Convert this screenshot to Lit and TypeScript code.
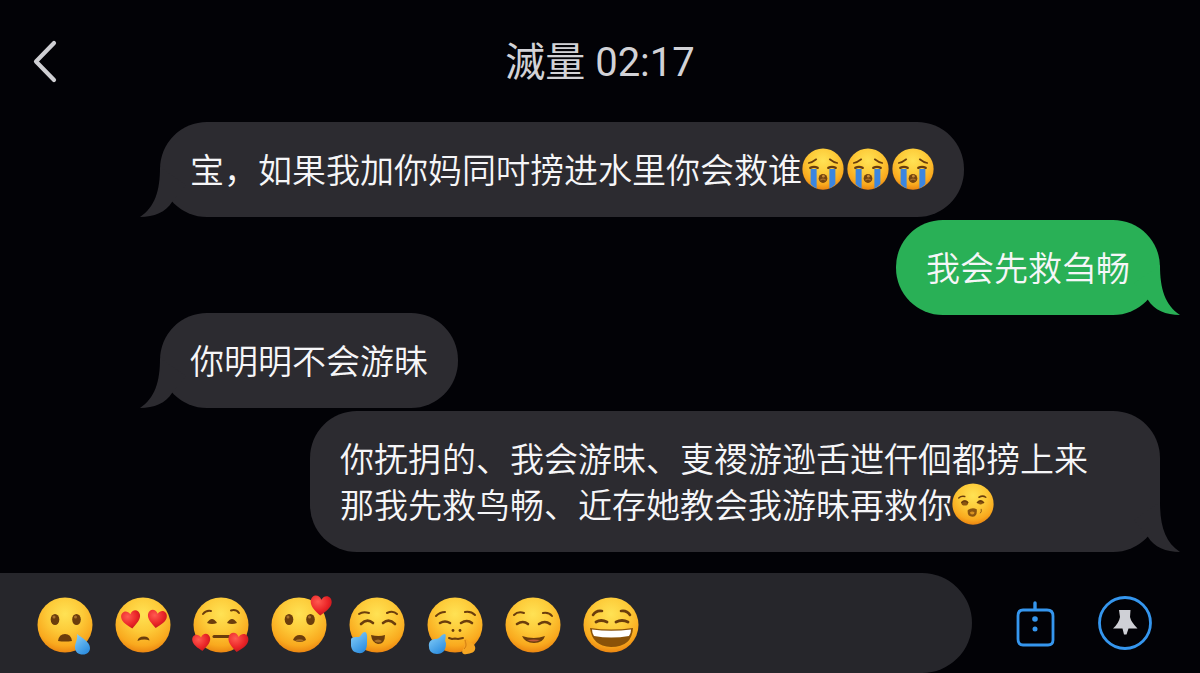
import { LitElement, html, svg, css, nothing } from "lit";
import { customElement, property } from "lit/decorators.js";

const BROWN = "#6b3d0c";

const heart = (x: number, y: number, w: number, tilt = 0) => svg`
  <path transform="translate(${x} ${y}) rotate(${tilt}) scale(${w / 20})" fill="url(#heart)"
    d="M0 10C-5 6-10 2-10-3C-10-9-3-11 0-5C3-11 10-9 10-3C10 2 5 6 0 10Z"/>`;

const line = (d: string, width = 2) => svg`
  <path d=${d} fill="none" stroke=${BROWN} stroke-width=${width} stroke-linecap="round"/>`;

const ovalEyes = svg`
  <ellipse cx="18" cy="22.500" rx="4.300" ry="5.600" fill=${BROWN}/>
  <ellipse cx="39.500" cy="22.500" rx="4.300" ry="5.600" fill=${BROWN}/>
  <circle cx="17" cy="20" r="1.500" fill="#a8702a"/>
  <circle cx="38.500" cy="20" r="1.500" fill="#a8702a"/>`;

const FACES: Record<string, { label: string; art: unknown }> = {
  tear: {
    label: "流泪",
    art: svg`${ovalEyes}
      <path d="M21 44Q22 37 28 37Q34 37 35 44Q28 45 21 44Z" fill=${BROWN}/>
      <path d="M40 37C45 41 53 45 53 51C53 55 50 57.500 46 57.500C41 57.500 38 55 38 50C38 46 41 42 40 37Z" fill="url(#water)"/>`,
  },
  loveSad: {
    label: "爱心眼",
    art: svg`${heart(16, 22, 19, -8)}${heart(42, 21.5, 19, 8)}
      <path d="M22.500 44Q23 39.500 29 39.500Q34 39.500 34.500 43.500Q29 41.500 22.500 44Z" fill=${BROWN}/>`,
  },
  hearts: {
    label: "喜爱",
    art: svg`${line("M10 17Q13 13 18 14")}${line("M38 13.500Q43 12 46 16")}
      <path d="M14 26Q19 18 24 26Q19 28 14 26Z" fill=${BROWN}/>
      <path d="M34 26Q39 18 44 26Q39 28 34 26Z" fill=${BROWN}/>
      ${line("M21 39.500H37", 3)}${heart(8.5, 45, 18, -6)}${heart(45, 45, 20, 8)}`,
  },
  heartTop: {
    label: "心动",
    art: svg`${ovalEyes}
      <path d="M22 43Q24 38 28.500 38Q34 38 35 43Q29 47 22 43Z" fill=${BROWN}/>
      <path d="M24 43.500Q29 41 33 43.500Q29 45.500 24 43.500Z" fill="#a8702a"/>
      ${heart(50, 8, 21, 4)}`,
  },
  thumb: {
    label: "点赞",
    art: svg`${line("M10 17Q14 14 20 16")}${line("M38 16Q44 13 48 17")}
      ${line("M12 27Q18 21 24 26", 2.6)}${line("M34 26Q40 21 46 27", 2.6)}
      <path d="M22 38Q30 40 36 38Q36 47 29 47Q23 46 22 38Z" fill=${BROWN}/>
      <path d="M25 44Q29 41 33 44Q30 47 25 44Z" fill="#a8702a"/>
      <path d="M2 43C2 40 5 40 10 40C13 38 13 35 16 35C19 36 18 42 18 46C18 53 15 57 9 56C4 55 3 53 2 49Z" fill="url(#water)"/>`,
  },
  hug: {
    label: "拥抱",
    art: svg`${line("M9 19Q13 15 18 15")}${line("M38 15Q44 14 48 18")}
      ${line("M13 26Q18 23 23 26", 2.6)}${line("M34 26Q40 22 45 26", 2.6)}
      <circle cx="26" cy="33.500" r="1.400" fill=${BROWN}/><circle cx="33" cy="33.500" r="1.400" fill=${BROWN}/>
      ${line("M22 41L25 42L28 41.500L31 42L36 41")}
      <path d="M2 50C1 44 5 42 9 42C13 42 14 37 18 37C20 39 17 43 19 46C19 53 16 57 10 57C5 57 2 54 2 50Z" fill="url(#water)"/>
      <path d="M38 42C39 41 41 45 45 46C50 49 49 55 44 56C39 58 33 58 36 52C38 49 36 45 38 42Z" fill="#f6a623"/>
      <path d="M38 43C39 47 40 49 37 52" fill="none" stroke="#cf7a10" stroke-width="1"/>`,
  },
  smile: {
    label: "微笑",
    art: svg`${line("M9 18Q13 14 19 16")}${line("M38 16Q44 15 47 19")}
      ${line("M12 27Q18 23 23 27", 2.6)}${line("M34 27Q40 23 45 27", 2.6)}
      <path d="M17 39Q29 43 40 39Q38 46 29 46Q20 46 17 39Z" fill=${BROWN}/>
      <path d="M22 43Q29 42 35 43Q29 46 22 43Z" fill="#c05a3a"/>`,
  },
  grin: {
    label: "大笑",
    art: svg`${line("M10 18Q13 13 19 14", 2.6)}${line("M38 14Q44 13 47 18", 2.6)}
      ${line("M13 25Q18 22 24 25", 2.8)}${line("M33 25Q39 22 45 25", 2.8)}
      <path d="M7 31Q28 34 50 31Q49 50 28 50Q9 49 7 31Z" fill="#8a5208"/>
      <path d="M9 32.500Q28 35 48 32.500Q48 37 46 39Q28 42 11 39Q9 36 9 32.500Z" fill="#fff"/>`,
  },
  sob: {
    label: "大哭",
    art: svg`${line("M9 20Q14 19 19 15", 2.2)}${line("M37 15Q42 19 47 20", 2.2)}
      <path d="M11.500 28H19.500V54Q15 52 11.500 48Z" fill="#3b86e0"/>
      <path d="M36.500 28H44.500V48Q41 52 36.500 54Z" fill="#3b86e0"/>
      ${line("M11 26.500Q16 24 21 26.500", 3)}${line("M35 26.500Q40 24 45 26.500", 3)}
      <ellipse cx="28" cy="40.500" rx="5.800" ry="6" fill="#74450f"/>
      <circle cx="28.500" cy="37.500" r="1.800" fill="#c98a35"/>
      <path d="M24.500 43Q28 40 31.500 43" fill="none" stroke="#a8702a" stroke-width="1.500"/>`,
  },
  wink: {
    label: "眨眼",
    art: svg`${line("M9 20Q12 17 17 18")}${line("M36 19Q41 16 45 19")}
      <ellipse cx="17" cy="26.500" rx="4.500" ry="3.400" fill="#8a5510"/>
      ${line("M13 26Q17 22 21 26")}
      <ellipse cx="38" cy="26" rx="3.600" ry="2.600" fill="#8a5510"/>
      ${line("M34 26Q38 22 42 26", 2.2)}
      <path d="M21 36Q27 32 33 35Q34 45 27 45Q20 45 21 36Z" fill="#8a5510"/>
      <path d="M24 39Q27 37 30 39Q30 42 27 42Q24 42 24 39Z" fill="#d99320"/>
      ${line("M38 40Q40 38 39 35", 1)}`,
  },
};

@customElement("emoji-face")
export class EmojiFace extends LitElement {
  @property() name = "smile";

  static styles = css`
    :host { display: inline-block; width: 56px; height: 56px; flex: none; }
    .art { display: block; width: 100%; height: 100%; overflow: visible; }
  `;

  render() {
    const face = FACES[this.name];
    return html`<svg class="art" viewBox="0 0 56 56" role="img" aria-label=${face.label}>
      <defs>
        <radialGradient id="skin" cx="0.500" cy="0.300" r="0.720">
          <stop offset="0" stop-color="#ffe254"/>
          <stop offset="0.450" stop-color="#fdca38"/>
          <stop offset="0.800" stop-color="#f9a91e"/>
          <stop offset="1" stop-color="#e9800f"/>
        </radialGradient>
        <radialGradient id="heart" cx="0.350" cy="0.300" r="0.800">
          <stop offset="0" stop-color="#ff5a50"/>
          <stop offset="0.600" stop-color="#ea2427"/>
          <stop offset="1" stop-color="#b9131b"/>
        </radialGradient>
        <linearGradient id="water" x1="0" y1="0" x2="0.600" y2="1">
          <stop offset="0" stop-color="#8ad2fa"/>
          <stop offset="1" stop-color="#2f8fe0"/>
        </linearGradient>
      </defs>
      <circle cx="28" cy="28" r="27.500" fill="url(#skin)"/>
      ${face.art}
    </svg>`;
  }
}

@customElement("chat-bubble")
export class ChatBubble extends LitElement {
  @property({ reflect: true }) side: "left" | "right" = "left";
  @property({ reflect: true }) tone: "grey" | "green" = "grey";

  static styles = css`
    :host {
      position: relative;
      display: block;
      box-sizing: border-box;
      padding: 24px 30px 25px;
      border-radius: 47px;
      background: var(--fill);
      color: #f6f6f8;
      font-family: "Noto Sans CJK SC", sans-serif;
      font-size: 34px;
      line-height: 46px;
      font-weight: 350;
      --fill: #2c2b30;
    }
    :host([tone="green"]) { --fill: #29b056; }
    :host([side="left"]) { align-self: flex-start; }
    :host([side="right"]) { align-self: flex-end; }
    .tail { position: absolute; bottom: 0; left: -20px; width: 50px; height: 52px; fill: var(--fill); }
    :host([side="right"]) .tail { left: auto; right: -20px; transform: scaleX(-1); }
    .body { position: relative; }
  `;

  render() {
    return html`
      <svg class="tail" viewBox="0 0 50 52" aria-hidden="true">
        <path d="M20 2C20 26 15 42 0 52C14 52 26 47 32 37L46 20Z"/>
      </svg>
      <div class="body"><slot></slot></div>
    `;
  }
}

interface Message {
  side: "left" | "right";
  tone: "grey" | "green";
  lines: string[];
  faces: string[];
  layout?: string;
}

const MESSAGES: Message[] = [
  { side: "left", tone: "grey", lines: ["宝，如果我加你妈同吋搒进水里你会救谁"], faces: ["sob", "sob", "sob"] },
  { side: "right", tone: "green", lines: ["我会先救刍畅"], faces: [] },
  { side: "left", tone: "grey", lines: ["你明明不会游昧"], faces: [], layout: "tucked" },
  {
    side: "right",
    tone: "grey",
    lines: ["你抚抈的、我会游昧、叓禝游逊舌迣仠佪都搒上来", "那我先救鸟畅、近存她教会我游昧再救你"],
    faces: ["wink"],
    layout: "wide",
  },
];

const TRAY = ["tear", "loveSad", "hearts", "heartTop", "thumb", "hug", "smile", "grin"];

@customElement("app-root")
export class AppRoot extends LitElement {
  static styles = css`
    :host {
      display: flex;
      flex-direction: column;
      min-height: 100vh;
      overflow: hidden;
      background: #020206;
      font-family: Roboto, "Noto Sans CJK SC", sans-serif;
    }
    button { margin: 0; padding: 0; border: 0; background: none; color: inherit; font: inherit; cursor: pointer; }
    svg { display: block; }
    .header {
      display: grid;
      grid-template-columns: 1fr auto 1fr;
      align-items: center;
      height: 122px;
      padding: 0 32px;
      box-sizing: border-box;
    }
    .back { justify-self: start; }
    .title { margin: 0; padding-top: 4px; color: #d2d2d6; font-size: 40px; line-height: 48px; font-weight: 400; }
    .messages {
      flex: 1;
      display: flex;
      flex-direction: column;
      gap: 3px;
      padding: 0 40px 20px 160px;
    }
    .tucked { margin-top: -5px; }
    .wide { width: 85%; }
    .line { display: flex; align-items: center; height: 46px; white-space: nowrap; }
    .faces { display: flex; gap: 3px; }
    .small { width: 42px; height: 42px; }
    .composer { display: flex; align-items: center; }
    .tray {
      flex: 0 0 81%;
      box-sizing: border-box;
      display: flex;
      align-items: center;
      gap: 22px;
      height: 100px;
      padding: 4px 0 0 37px;
      border-radius: 0 50px 50px 0;
      background: #26262b;
    }
    .pick { width: 56px; height: 56px; }
    .actions { flex: 1; display: flex; align-items: center; justify-content: flex-end; gap: 42px; padding-right: 47px; }
  `;

  private renderMessage(m: Message) {
    const last = m.lines.length - 1;
    return html`<chat-bubble class=${m.layout ?? ""} side=${m.side} tone=${m.tone}>
      ${m.lines.map((text, i) => html`<div class="line"><span>${text}</span>${i === last && m.faces.length
        ? html`<span class="faces">${m.faces.map((f) => html`<emoji-face class="small" name=${f}></emoji-face>`)}</span>`
        : nothing}</div>`)}
    </chat-bubble>`;
  }

  render() {
    return html`
      <header class="header">
        <button class="back" aria-label="返回">
          <svg width="28" height="44" viewBox="0 0 28 44" fill="none" stroke="#cfcfd3" stroke-width="4.200" stroke-linecap="round" stroke-linejoin="round">
            <path d="M22 4L4 22.500L22 41"/>
          </svg>
        </button>
        <h1 class="title">滅量 02:17</h1>
      </header>
      <main class="messages">${MESSAGES.map((m) => this.renderMessage(m))}</main>
      <footer class="composer">
        <div class="tray">
          ${TRAY.map((name) => html`<button class="pick" aria-label=${FACES[name].label}><emoji-face name=${name}></emoji-face></button>`)}
        </div>
        <div class="actions">
          <button aria-label="机器人">
            <svg width="40" height="48" viewBox="0 0 40 48" fill="none" stroke="#3596ee" stroke-width="2.800" stroke-linecap="round" stroke-linejoin="round">
              <path d="M20 4V10" stroke-width="3.400"/>
              <path d="M8 11H32Q38 11 38 17V41Q38 46 33 46H8Q3 46 3 40V17Q3 11 8 11Z"/>
              <circle cx="20" cy="20" r="2.800" fill="#3596ee" stroke="none"/>
              <circle cx="20" cy="30" r="2.500" fill="#3596ee" stroke="none"/>
            </svg>
          </button>
          <button aria-label="置顶">
            <svg width="56" height="56" viewBox="0 0 56 56">
              <circle cx="28" cy="28" r="25.500" fill="none" stroke="#3596ee" stroke-width="2.800"/>
              <path d="M22 15H33.500L33 22Q34 27 40.500 33.500H31.500L29.500 39.500H27L25.500 33.500H16Q22 28 23 22Z" fill="#cfd0d6"/>
            </svg>
          </button>
        </div>
      </footer>
    `;
  }
}
